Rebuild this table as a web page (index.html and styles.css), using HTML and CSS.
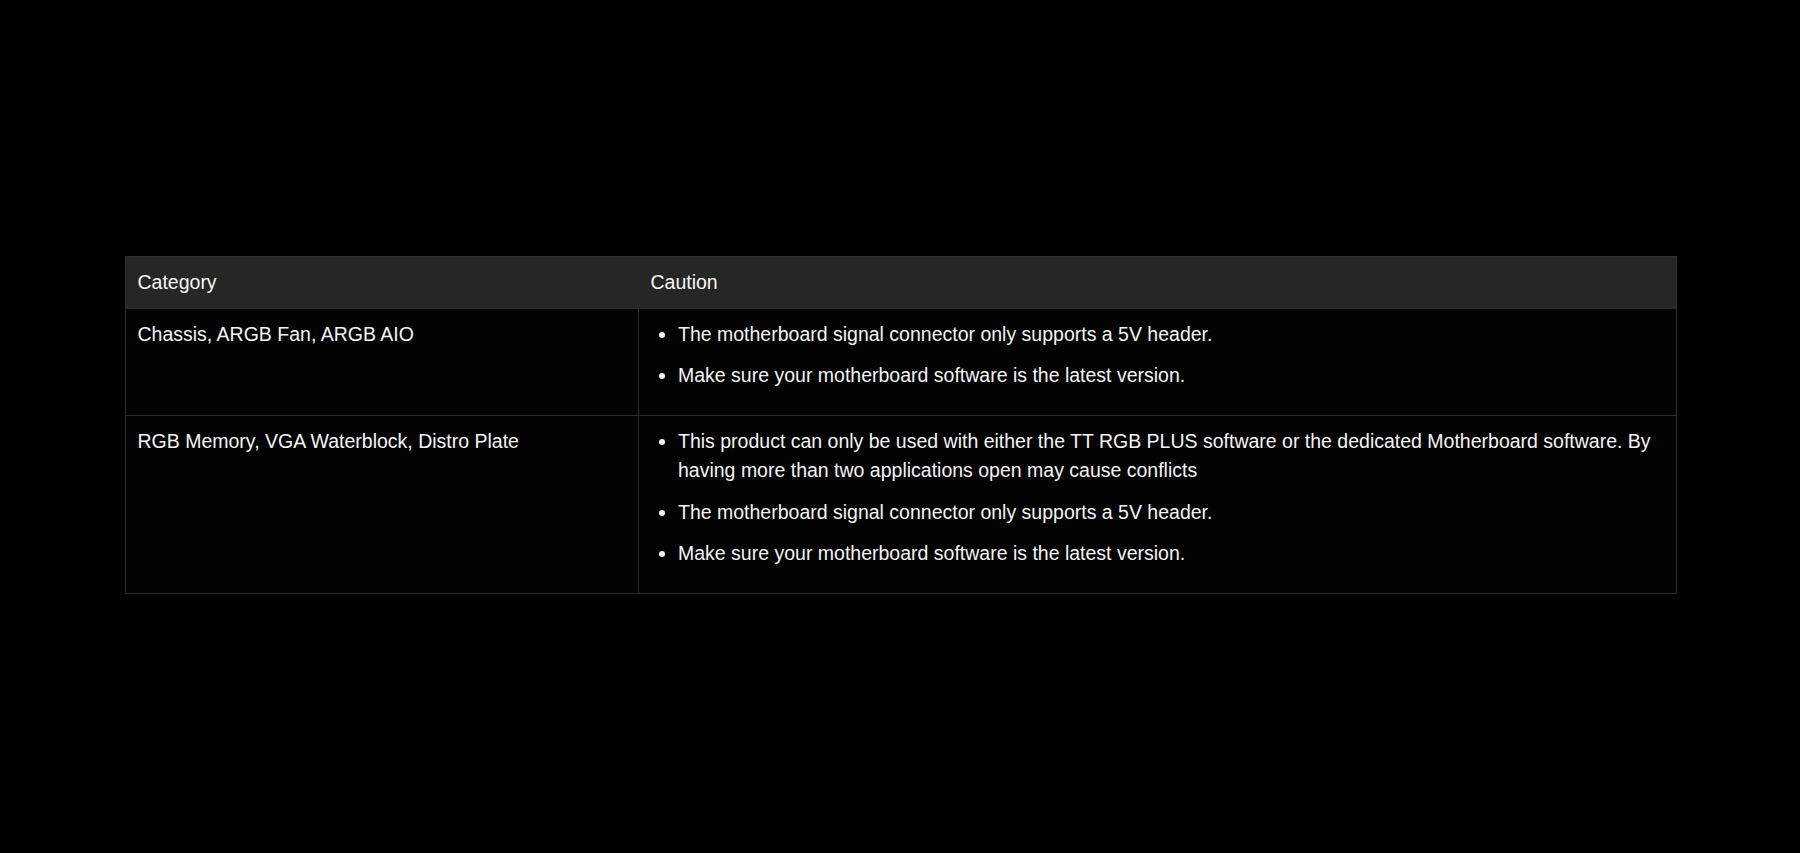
FILE: index.html
```html
<!DOCTYPE html>
<html lang="en">
<head>
<meta charset="utf-8">
<title>Caution table</title>
<link rel="stylesheet" href="styles.css">
</head>
<body>
<main class="page">
  <table class="caution-table">
    <thead>
      <tr>
        <th class="col-cat">Category</th>
        <th class="col-caution">Caution</th>
      </tr>
    </thead>
    <tbody>
      <tr>
        <td>Chassis, ARGB Fan, ARGB AIO</td>
        <td>
          <ul class="notes">
            <li>The motherboard signal connector only supports a 5V header.</li>
            <li>Make sure your motherboard software is the latest version.</li>
          </ul>
        </td>
      </tr>
      <tr>
        <td>RGB Memory, VGA Waterblock, Distro Plate</td>
        <td>
          <ul class="notes">
            <li>This product can only be used with either the TT RGB PLUS software or the dedicated Motherboard software. By having more than two applications open may cause conflicts</li>
            <li>The motherboard signal connector only supports a 5V header.</li>
            <li>Make sure your motherboard software is the latest version.</li>
          </ul>
        </td>
      </tr>
    </tbody>
  </table>
</main>
</body>
</html>
```

FILE: styles.css
```css
html, body {
  margin: 0;
  padding: 0;
  background: #000;
}

body {
  width: 1800px;
  height: 853px;
  overflow: hidden;
  font-family: "Liberation Sans", Arial, sans-serif;
  color: #f4f4f4;
}

.page {
  padding-top: 256px;
  display: flex;
  justify-content: center;
}

.caution-table {
  width: 1552px;
  margin-left: 1px;
  border-collapse: collapse;
  font-size: 19.5px;
  line-height: 28.7px;
  background: #030303;
  border: 1px solid #2c2c2c;
}

.caution-table th {
  background: #262626;
  text-align: left;
  font-weight: normal;
  padding: 11px 12px 11px;
  color: #f6f6f6;
}

.col-cat {
  width: 489px;
}

.caution-table td {
  vertical-align: top;
  padding: 11px 12px 12px;
  border: 1px solid #2c2c2c;
}

.notes {
  margin: 0;
  padding: 0 0 0 27px;
}

.notes li {
  margin-bottom: 13px;
}
```
